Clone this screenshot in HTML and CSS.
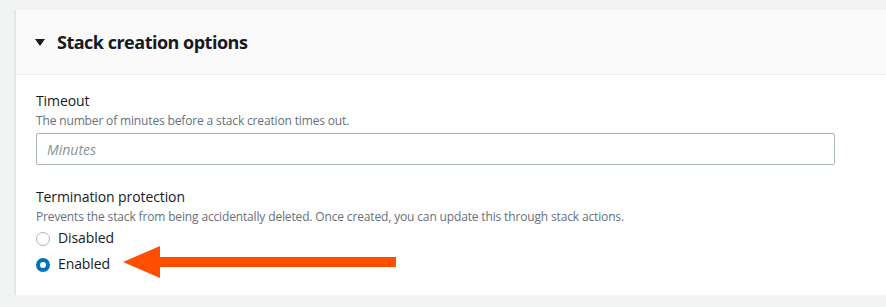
FILE: index.html
```html
<!DOCTYPE html>
<html lang="en">
<head>
    <meta charset="UTF-8">
    <meta name="viewport" content="width=device-width, initial-scale=1.0">
    <title>Stack creation options</title>
    <link rel="stylesheet" href="styles.css">
</head>

<body>
    <div class="page">
        <div class="panel">
            <div class="panel-header">
                <span class="caret"></span>
                <h2>Stack creation options</h2>
            </div>
            <div class="panel-body">
                <div class="field">
                    <label class="field-label" for="timeout">Timeout</label>
                    <div class="field-desc">The number of minutes before a stack creation times out.</div>
                    <input type="text" id="timeout" placeholder="Minutes">
                </div>

                <div class="field field-spaced">
                    <div class="field-label">Termination protection</div>
                    <div class="field-desc">Prevents the stack from being accidentally deleted. Once created, you can update this through stack actions.</div>
                    <div class="radio-group">
                        <label class="radio">
                            <span class="radio-dot"></span>
                            Disabled
                        </label>
                        <label class="radio">
                            <span class="radio-dot checked"></span>
                            Enabled
                        </label>
                    </div>
                </div>

                <!-- annotation arrow -->
                <svg class="arrow" width="276" height="34" viewBox="0 0 276 34">
                    <polygon points="0,16 37,0 37,11 273,11 273,21 37,21 37,32" fill="#fe4f00"/>
                </svg>
            </div>
        </div>
    </div>
</body>
</html>
```

FILE: styles.css
```css
/* AWS console style panel */
body {
    margin: 0;
    background-color: #f2f3f3;
    font-family: "Open Sans", Arial, sans-serif;
    color: #16191f;
    overflow: hidden;
}

.page {
    padding: 10px 0 0 15px;
}

.panel {
    width: 900px;
    background: #ffffff;
    border-left: 1px solid #e3e6e6;
    box-shadow: 0 1px 1px 0 rgba(0, 28, 36, 0.3), 1px 1px 1px 0 rgba(0, 28, 36, 0.15);
}

.panel-header {
    height: 64px;
    display: flex;
    align-items: center;
    padding-left: 19px;
    background-color: #fafafa;
    border-bottom: 1px solid #eaeded;
}

.caret {
    width: 0;
    height: 0;
    border-left: 5.5px solid transparent;
    border-right: 5.5px solid transparent;
    border-top: 7px solid #16191f;
    margin-right: 12px;
    margin-top: 1px;
}

.panel-header h2 {
    margin: 0;
    font-size: 18px;
    font-weight: 700;
    letter-spacing: -0.5px;
}

.panel-body {
    position: relative;
    padding: 16px 20px 21px 20px;
}

.field-label {
    display: block;
    font-size: 14px;
    line-height: 20px;
    letter-spacing: -0.1px;
}

.field-desc {
    margin-top: 2px;
    font-size: 12px;
    line-height: 16px;
    color: #687078;
    letter-spacing: -0.15px;
}

.field-spaced {
    margin-top: 22px;
}

input {
    box-sizing: border-box;
    width: 799px;
    height: 32px;
    margin-top: 4px;
    padding: 0 10px;
    border: 1px solid #aab7b8;
    border-radius: 2px;
    font-family: inherit;
    font-size: 14px;
    display: block;
}

input::placeholder {
    color: #879596;
    font-style: italic;
}

.radio-group {
    margin-top: 3px;
    display: flex;
    flex-direction: column;
    gap: 6px;
}

.radio {
    display: flex;
    align-items: center;
    font-size: 14px;
    line-height: 20px;
    letter-spacing: -0.1px;
}

.radio-dot {
    box-sizing: border-box;
    width: 14px;
    height: 14px;
    border-radius: 50%;
    border: 1px solid #aab7b8;
    margin-right: 8px;
    background: #ffffff;
    margin-top: 1px;
}

.radio-dot.checked {
    border: 4px solid #0073bb;
}

.arrow {
    position: absolute;
    left: 107px;
    top: 171px;
}
```
